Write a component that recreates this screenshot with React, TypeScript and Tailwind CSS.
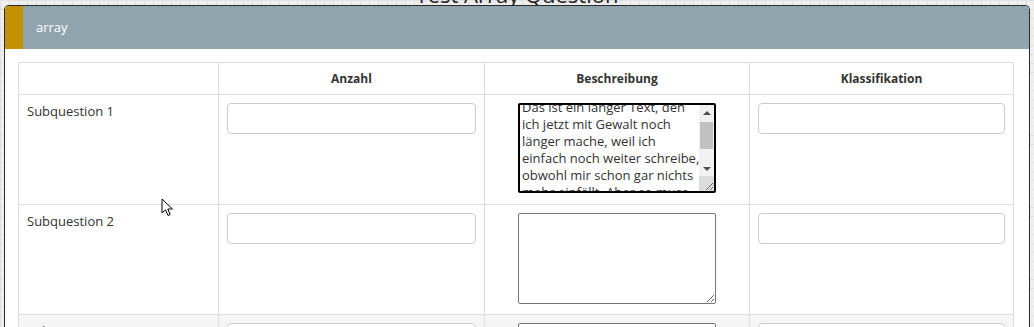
import { useEffect, useRef } from "react";

const longText =
  "Das ist ein langer Text, den ich jetzt mit Gewalt noch länger mache, weil ich einfach noch weiter schreibe, obwohl mir schon gar nichts mehr einfällt. Aber so muss es sein, damit der Text auch wirklich lang genug ist.";

const rows = ["Subquestion 1", "Subquestion 2", "Subquestion 3"];

const TextInput = () => (
  <input
    type="text"
    className="block w-full h-[31px] rounded-[4px] border border-[#cccccc] bg-white px-2 text-[13px] outline-none"
  />
);

const Cell = ({ children }: { children?: React.ReactNode }) => (
  <td className="border border-[#dddddd] p-2 align-top">{children}</td>
);

// textarea with the classic scrollbar the screenshot shows
const LongArea = () => {
  const areaRef = useRef<HTMLTextAreaElement>(null);

  useEffect(() => {
    if (areaRef.current) areaRef.current.scrollTop = 8;
  }, []);

  return (
    <div className="relative h-[90px] w-[198px]">
      <textarea
        ref={areaRef}
        defaultValue={longText}
        className="block h-full w-full resize-none overflow-hidden rounded-[2px] border-2 border-black bg-white py-[2px] pl-[2px] pr-[14px] text-[13px] leading-[17px] text-[#333333] outline-none"
      />
      <div className="absolute bottom-[2px] right-[2px] top-[2px] flex w-[15px] flex-col bg-[#f1f1f1]">
        <div className="flex h-[15px] items-center justify-center">
          <div className="h-0 w-0 border-x-[4px] border-b-[4px] border-x-transparent border-b-[#505050]" />
        </div>
        <div className="flex-1 px-[1px] pt-[2px]">
          <div className="h-[27px] bg-[#c1c1c1]" />
        </div>
        <div className="flex h-[15px] items-center justify-center">
          <div className="h-0 w-0 border-x-[4px] border-t-[4px] border-x-transparent border-t-[#505050]" />
        </div>
        <div className="relative h-[15px] bg-[#dcdcdc]">
          <svg className="absolute bottom-0 right-0" width="10" height="10" viewBox="0 0 10 10">
            <path d="M9 2 L2 9 M9 6 L6 9" stroke="#666666" strokeWidth="1" />
          </svg>
        </div>
      </div>
    </div>
  );
};

export default function App() {
  return (
    <div className="relative h-[327px] overflow-hidden bg-[#eeeeee] bg-[image:linear-gradient(#e2e2e2_1px,transparent_1px),linear-gradient(90deg,#e2e2e2_1px,transparent_1px)] bg-size-[9px_9px] pl-[4px] pr-[4px] font-['Open_Sans',sans-serif] text-[#333333]">
      <div className="flex h-[5px] items-end justify-center">
        <h1 className="mb-[-4px] text-[22px] leading-[30px] text-[#222222]">Test Array Question</h1>
      </div>

      <div className="relative rounded-t-[5px] border-x border-t border-[#2a2a2a] bg-white">
        <div className="flex h-[43px] items-center overflow-hidden rounded-tl-[4px] rounded-tr-[4px] bg-[#90a4ae]">
          <div className="h-full w-[18px] bg-[#c49102]" />
          <span className="pl-[13px] text-[13px] text-white">array</span>
        </div>

        <div className="pl-[13px] pr-[15px] pt-[13px]">
          <table className="w-full table-fixed border-collapse text-[13px]">
            <colgroup>
              <col className="w-[200px]" />
              <col className="w-[266px]" />
              <col className="w-[265px]" />
              <col />
            </colgroup>
            <thead>
              <tr className="h-[32px]">
                <th className="border border-[#dddddd]" />
                <th className="border border-[#dddddd] text-[12px] font-bold">Anzahl</th>
                <th className="border border-[#dddddd] text-[12px] font-bold">Beschreibung</th>
                <th className="border border-[#dddddd] text-[12px] font-bold">Klassifikation</th>
              </tr>
            </thead>
            <tbody>
              {rows.map((label, i) => (
                <tr key={label} className={i === 2 ? "h-[110px] bg-[#f5f5f5]" : "h-[110px]"}>
                  <Cell>
                    <span className="block leading-[17px]">{label}</span>
                  </Cell>
                  <Cell>
                    <TextInput />
                  </Cell>
                  <Cell>
                    <div className="flex justify-center">
                      {i === 0 ? (
                        <LongArea />
                      ) : (
                        <textarea className="block h-[91px] w-[198px] resize rounded-[2px] border border-[#767676] bg-white p-[2px] text-[13px] leading-[17px] outline-none" />
                      )}
                    </div>
                  </Cell>
                  <Cell>
                    <TextInput />
                  </Cell>
                </tr>
              ))}
            </tbody>
          </table>
        </div>
      </div>

      {/* mouse pointer caught in the screenshot */}
      <svg
        className="pointer-events-none absolute left-[161px] top-[198px]"
        width="14"
        height="20"
        viewBox="0 0 14 20"
      >
        <path
          d="M1 1 L1 15 L4.5 11.8 L7 17.5 L9.2 16.5 L6.8 11 L11.5 11 Z"
          fill="white"
          stroke="black"
          strokeWidth="1"
          strokeLinejoin="round"
        />
      </svg>
    </div>
  );
}
